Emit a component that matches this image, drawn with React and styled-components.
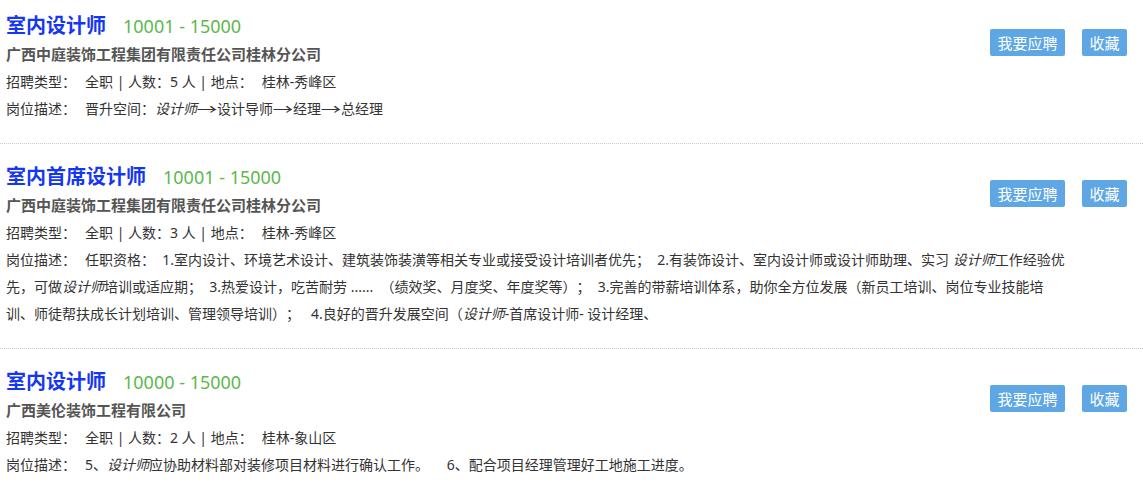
import React from "react";
import styled, { createGlobalStyle } from "styled-components";

const GlobalStyle = createGlobalStyle`
  html, body {
    margin: 0;
    padding: 0;
    background: #fff;
  }
  body {
    font-family: "Noto Sans", "Noto Sans CJK SC", sans-serif;
    color: #333;
    text-spacing-trim: space-all;
  }
`;

const jobs = [
  {
    id: 1,
    title: "室内设计师",
    salary: "10001 - 15000",
    company: "广西中庭装饰工程集团有限责任公司桂林分公司",
    count: 5,
    place: "桂林-秀峰区",
    desc: [
      "晋升空间：",
      { em: "设计师" },
      { arrow: true },
      "设计导师",
      { arrow: true },
      "经理",
      { arrow: true },
      "总经理",
    ],
  },
  {
    id: 2,
    title: "室内首席设计师",
    salary: "10001 - 15000",
    company: "广西中庭装饰工程集团有限责任公司桂林分公司",
    count: 3,
    place: "桂林-秀峰区",
    desc: [
      "任职资格：\u00a0 1.室内设计、环境艺术设计、建筑装饰装潢等相关专业或接受设计培训者优先；\u00a0 2.有装饰设计、室内设计师或设计师助理、实习 ",
      { em: "设计师" },
      "工作经验优先，可做",
      { em: "设计师" },
      "培训或适应期；\u00a0 3.热爱设计，吃苦耐劳 ......\u00a0 （绩效奖、月度奖、年度奖等）；\u00a0 3.完善的带薪培训体系，助你全方位发展（新员工培训、岗位专业技能培训、师徒帮扶成长计划培训、管理领导培训）；\u00a0\u00a0 4.良好的晋升发展空间（",
      { em: "设计师" },
      "-首席设计师- 设计经理、",
    ],
  },
  {
    id: 3,
    title: "室内设计师",
    salary: "10000 - 15000",
    company: "广西美伦装饰工程有限公司",
    count: 2,
    place: "桂林-象山区",
    desc: [
      "5、",
      { em: "设计师" },
      "应协助材料部对装修项目材料进行确认工作。\u3000 6、配合项目经理管理好工地施工进度。",
    ],
  },
];

const List = styled.div`
  width: 1143px;
`;

const Item = styled.div`
  padding: 11px 0 21px 6px;
  margin-bottom: 7px;
  border-bottom: 1px dotted #c8c8c8;
  &:last-child {
    border-bottom: none;
  }
`;

const Top = styled.div`
  display: flex;
  justify-content: space-between;
  align-items: flex-start;
`;

const Info = styled.div`
  display: flex;
  flex-direction: column;
`;

const TitleRow = styled.div`
  display: flex;
  align-items: baseline;
  height: 30px;
  line-height: 30px;
`;

const Title = styled.a`
  font-size: 20px;
  font-weight: bold;
  color: #1637f2;
  text-decoration: none;
`;

const Salary = styled.span`
  font-size: 18px;
  color: #5cb84c;
  margin-left: 17px;
`;

const Company = styled.div`
  font-size: 15px;
  font-weight: bold;
  color: #555;
  line-height: 27px;
`;

const Line = styled.div`
  font-size: 14px;
  line-height: 27px;
  color: #333;
`;

const Label = styled.span`
  margin-right: 9px;
`;

const Desc = styled(Line)`
  padding-right: 72px;
`;

const Em = styled.em`
  font-style: italic;
`;

const Arrow = styled.span`
  display: inline-block;
  width: 20px;
  text-align: center;
  transform: scaleX(1.45);
`;

const Actions = styled.div`
  display: flex;
  gap: 17px;
  margin-top: 18px;
  margin-right: 16px;
`;

const Button = styled.button`
  height: 27px;
  padding: 0 ${(props) => props.pad}px;
  border: none;
  border-radius: 2px;
  background: #5ea7e4;
  color: #fff;
  font-family: "Noto Sans CJK SC", sans-serif;
  font-size: 15px;
  line-height: 27px;
  cursor: pointer;
`;

const renderDesc = (parts) =>
  parts.map((p, i) => {
    if (typeof p === "string") return <React.Fragment key={i}>{p}</React.Fragment>;
    if (p.arrow) return <Arrow key={i}>→</Arrow>;
    return <Em key={i}>{p.em}</Em>;
  });

const JobItem = ({ job }) => (
  <Item>
    <Top>
      <Info>
        <TitleRow>
          <Title href="#">{job.title}</Title>
          <Salary>{job.salary}</Salary>
        </TitleRow>
        <Company>{job.company}</Company>
        <Line>
          <Label>招聘类型：</Label>全职 | 人数：{job.count} 人 | 地点：
          <Label />
          {job.place}
        </Line>
      </Info>
      <Actions>
        <Button pad={7.5}>我要应聘</Button>
        <Button pad={7.5}>收藏</Button>
      </Actions>
    </Top>
    <Desc>
      <Label>岗位描述：</Label>
      {renderDesc(job.desc)}
    </Desc>
  </Item>
);

const App = () => (
  <>
    <GlobalStyle />
    <List>
      {jobs.map((job) => (
        <JobItem key={job.id} job={job} />
      ))}
    </List>
  </>
);

export default App;
